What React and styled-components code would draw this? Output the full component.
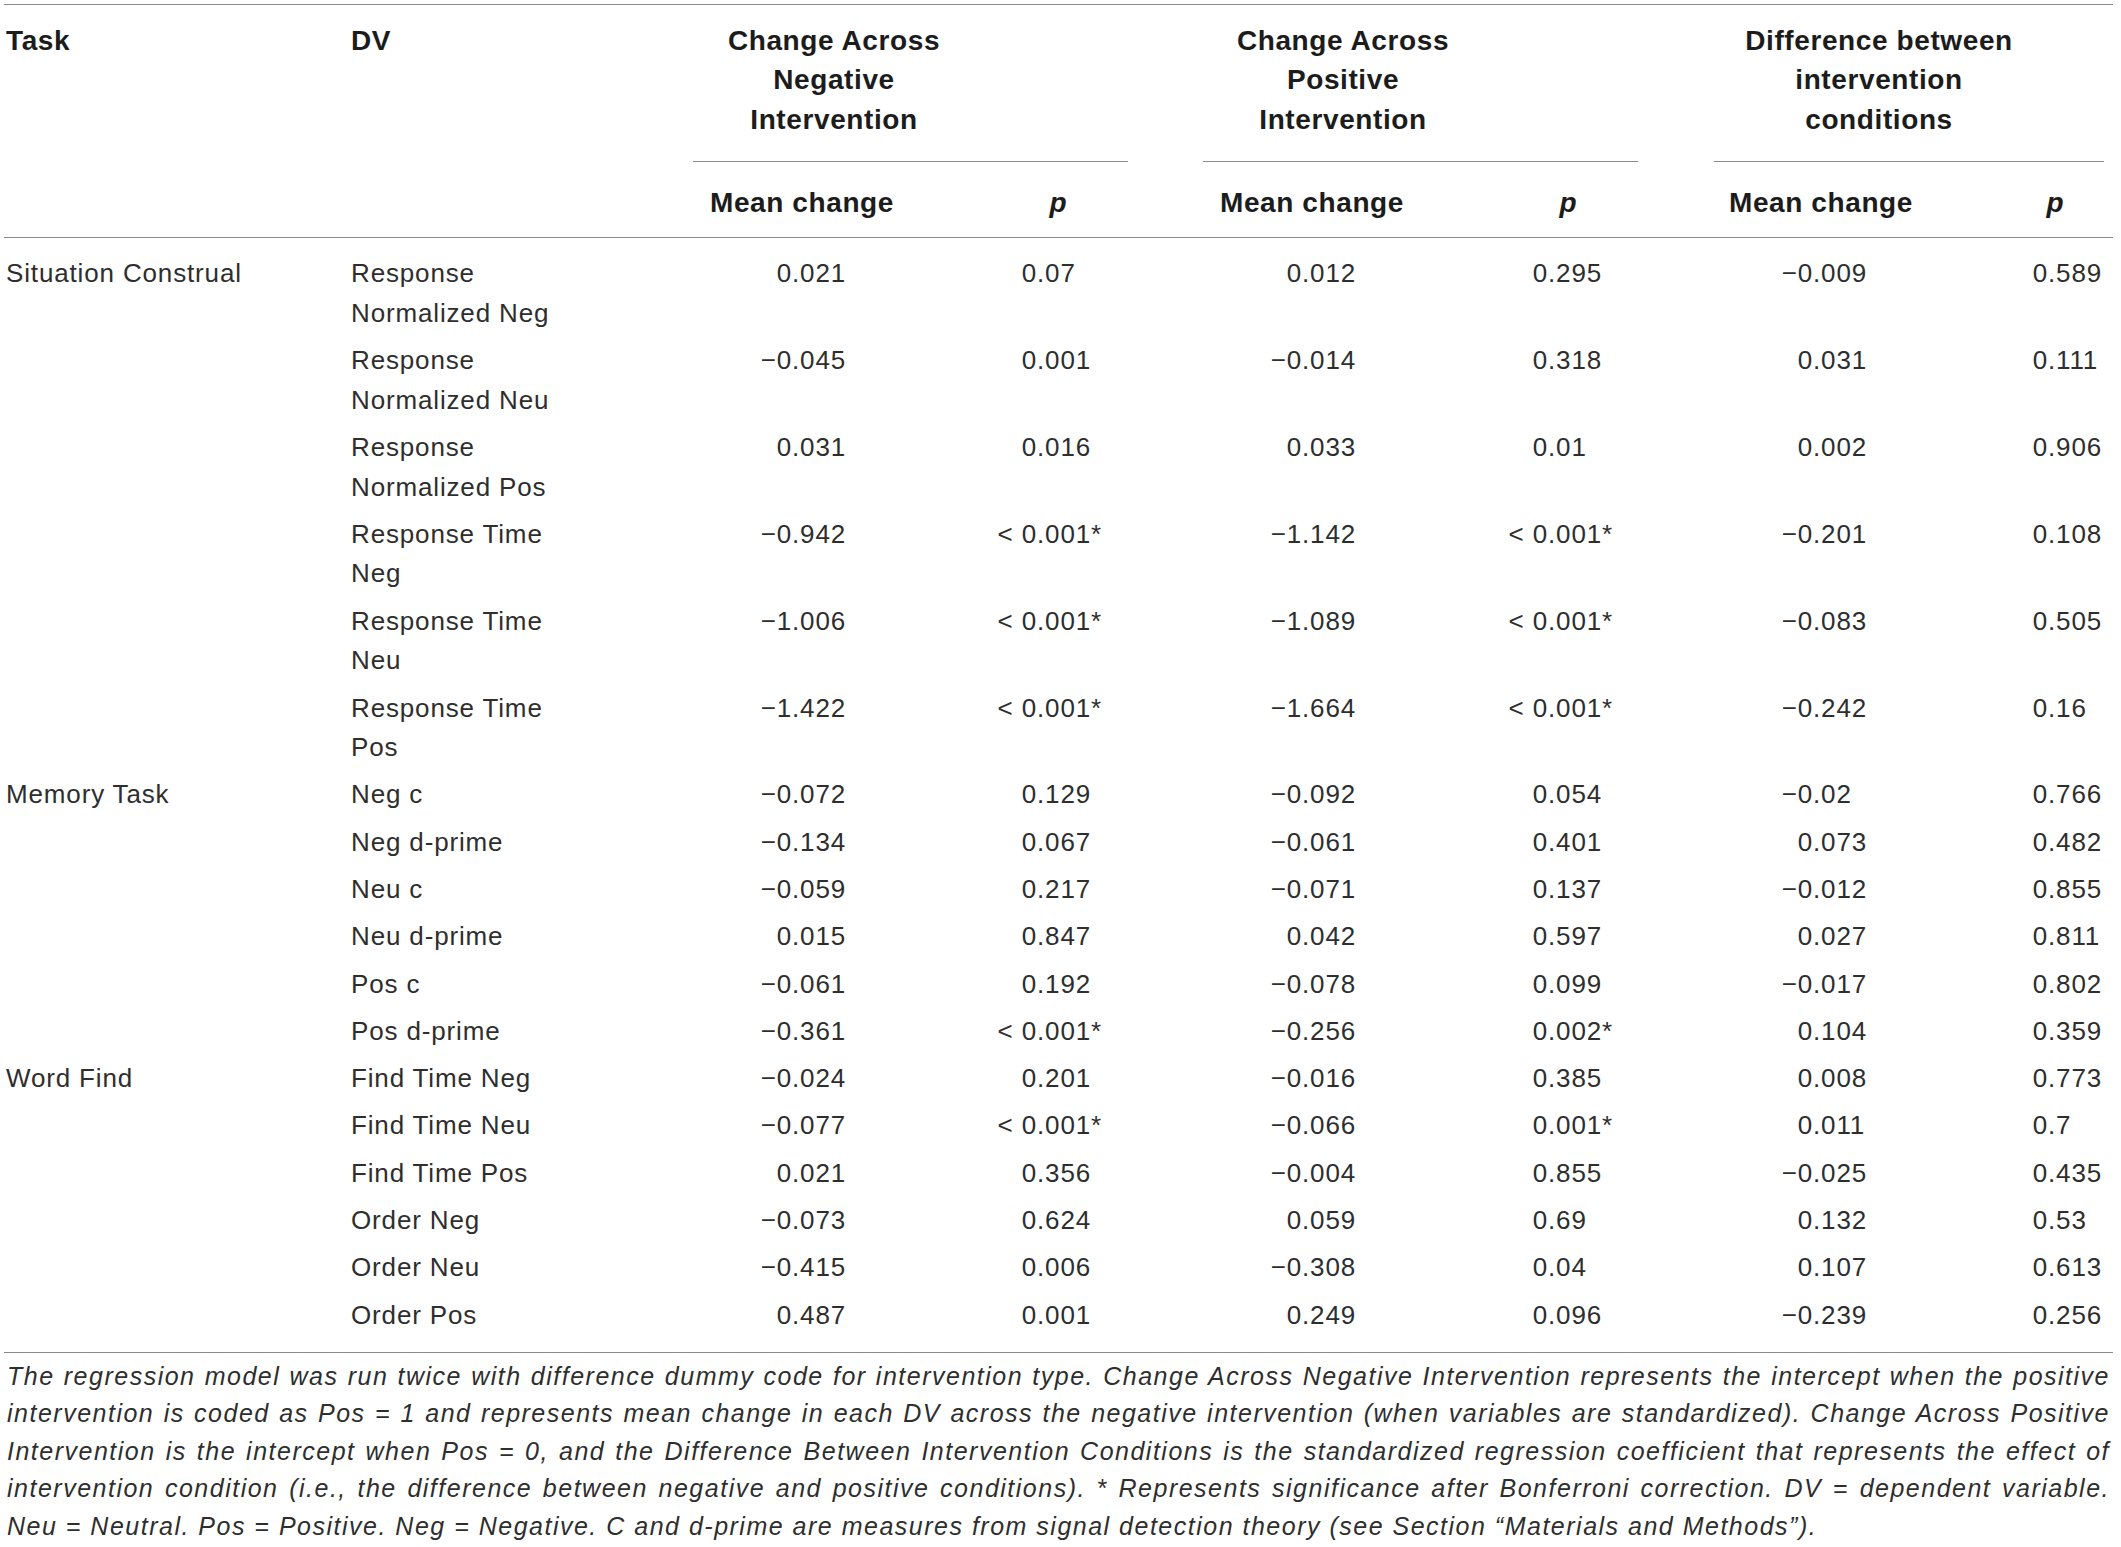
import React from "react"
import styled, { createGlobalStyle } from "styled-components"

const GlobalStyle = createGlobalStyle`
  body {
    margin: 0;
    background: #ffffff;
    font-family: "Liberation Sans", Arial, sans-serif;
    color: #2e2e2e;
  }
`;

const COLUMNS = "341px 348px 282px 228px 280px 231px 246px 153px";

const Page = styled.div`
  width: 2109px;
  padding: 4px 0 0 4px;
`;

const Head = styled.div`
  display: grid;
  grid-template-columns: ${COLUMNS};
  border-top: 1px solid #8a8a8a;
  border-bottom: 1px solid #8a8a8a;
  font-size: 28px;
  font-weight: 700;
  letter-spacing: 0.6px;
  line-height: 39.3px;
  color: #1c1c1c;
`;

const HeadLabel = styled.div`
  grid-row: span 2;
  padding: 16px 0 0 ${(p) => p.$pad}px;
`;

const GroupCell = styled.div`
  grid-column: span 2;
  margin-right: ${(p) => p.$gap}px;
  padding: 16px 0 22px;
  border-bottom: 1px solid #8a8a8a;
`;

const GroupTitle = styled.div`
  width: ${(p) => p.$width}px;
  text-align: center;
`;

const SubHead = styled.div`
  padding: 21.3px 0 14.4px ${(p) => p.$pad}px;
  font-style: ${(p) => (p.$italic ? "italic" : "normal")};
`;

const Body = styled.div`
  display: grid;
  grid-template-columns: ${COLUMNS};
  padding: 12.5px 0 12.5px;
  border-bottom: 1px solid #8a8a8a;
  font-size: 26px;
  letter-spacing: 0.85px;
  line-height: 39.6px;
`;

const TextCell = styled.div`
  padding: 3.85px 0 3.85px ${(p) => p.$pad}px;
  white-space: pre-line;
`;

const NumCell = styled.div`
  padding: 3.85px 0;
  white-space: pre;
`;

const IntPart = styled.span`
  display: inline-block;
  width: ${(p) => p.$dec}px;
  text-align: right;
`;

const Foot = styled.div`
  padding: 5px 3px 0 3px;
  font-size: 25px;
  font-style: italic;
  letter-spacing: 1.5px;
  line-height: 37.5px;
`;

const FootLine = styled.div`
  text-align: ${(p) => (p.$last ? "left" : "justify")};
  text-align-last: ${(p) => (p.$last ? "left" : "justify")};
  white-space: nowrap;
`;

// decimal point offset inside each numeric column
const DECIMALS = [99, 62, 99, 65, 99, 88];

const GROUPS = [
  { lines: ["Change Across", "Negative", "Intervention"], width: 282, gap: 75 },
  { lines: ["Change Across", "Positive", "Intervention"], width: 280, gap: 76 },
  { lines: ["Difference between", "intervention", "conditions"], width: 330, gap: 9 },
];

const SUBHEADS = [
  { label: "Mean change", pad: 17 },
  { label: "p", pad: 74.5, italic: true },
  { label: "Mean change", pad: 17 },
  { label: "p", pad: 76.5, italic: true },
  { label: "Mean change", pad: 15 },
  { label: "p", pad: 86.5, italic: true },
];

const M = "\u2212";

const ROWS = [
  ["Situation Construal", "Response\nNormalized Neg", "0.021", "0.07", "0.012", "0.295", `${M}0.009`, "0.589"],
  ["", "Response\nNormalized Neu", `${M}0.045`, "0.001", `${M}0.014`, "0.318", "0.031", "0.111"],
  ["", "Response\nNormalized Pos", "0.031", "0.016", "0.033", "0.01", "0.002", "0.906"],
  ["", "Response Time\nNeg", `${M}0.942`, "< 0.001*", `${M}1.142`, "< 0.001*", `${M}0.201`, "0.108"],
  ["", "Response Time\nNeu", `${M}1.006`, "< 0.001*", `${M}1.089`, "< 0.001*", `${M}0.083`, "0.505"],
  ["", "Response Time\nPos", `${M}1.422`, "< 0.001*", `${M}1.664`, "< 0.001*", `${M}0.242`, "0.16"],
  ["Memory Task", "Neg c", `${M}0.072`, "0.129", `${M}0.092`, "0.054", `${M}0.02`, "0.766"],
  ["", "Neg d-prime", `${M}0.134`, "0.067", `${M}0.061`, "0.401", "0.073", "0.482"],
  ["", "Neu c", `${M}0.059`, "0.217", `${M}0.071`, "0.137", `${M}0.012`, "0.855"],
  ["", "Neu d-prime", "0.015", "0.847", "0.042", "0.597", "0.027", "0.811"],
  ["", "Pos c", `${M}0.061`, "0.192", `${M}0.078`, "0.099", `${M}0.017`, "0.802"],
  ["", "Pos d-prime", `${M}0.361`, "< 0.001*", `${M}0.256`, "0.002*", "0.104", "0.359"],
  ["Word Find", "Find Time Neg", `${M}0.024`, "0.201", `${M}0.016`, "0.385", "0.008", "0.773"],
  ["", "Find Time Neu", `${M}0.077`, "< 0.001*", `${M}0.066`, "0.001*", "0.011", "0.7"],
  ["", "Find Time Pos", "0.021", "0.356", `${M}0.004`, "0.855", `${M}0.025`, "0.435"],
  ["", "Order Neg", `${M}0.073`, "0.624", "0.059", "0.69", "0.132", "0.53"],
  ["", "Order Neu", `${M}0.415`, "0.006", `${M}0.308`, "0.04", "0.107", "0.613"],
  ["", "Order Pos", "0.487", "0.001", "0.249", "0.096", `${M}0.239`, "0.256"],
];

const NOTE = [
  "The regression model was run twice with difference dummy code for intervention type. Change Across Negative Intervention represents the intercept when the positive",
  "intervention is coded as Pos = 1 and represents mean change in each DV across the negative intervention (when variables are standardized). Change Across Positive",
  "Intervention is the intercept when Pos = 0, and the Difference Between Intervention Conditions is the standardized regression coefficient that represents the effect of",
  "intervention condition (i.e., the difference between negative and positive conditions). * Represents significance after Bonferroni correction. DV = dependent variable.",
  "Neu = Neutral. Pos = Positive. Neg = Negative. C and d-prime are measures from signal detection theory (see Section \u201cMaterials and Methods\u201d).",
];

function Num({ value, dec }) {
  const dot = value.indexOf(".");
  return (
    <NumCell>
      <IntPart $dec={dec}>{value.slice(0, dot)}</IntPart>
      {value.slice(dot)}
    </NumCell>
  );
}

export default function App() {
  return (
    <>
      <GlobalStyle />
      <Page>
        <Head>
          <HeadLabel $pad={2}>Task</HeadLabel>
          <HeadLabel $pad={6}>DV</HeadLabel>
          {GROUPS.map((g, i) => (
            <GroupCell key={i} $gap={g.gap}>
              <GroupTitle $width={g.width}>
                {g.lines.map((l, j) => (
                  <div key={j}>{l}</div>
                ))}
              </GroupTitle>
            </GroupCell>
          ))}
          {SUBHEADS.map((s, i) => (
            <SubHead key={i} $pad={s.pad} $italic={s.italic}>
              {s.label}
            </SubHead>
          ))}
        </Head>

        <Body>
          {ROWS.map((row, r) => (
            <React.Fragment key={r}>
              <TextCell $pad={2}>{row[0]}</TextCell>
              <TextCell $pad={6}>{row[1]}</TextCell>
              {row.slice(2).map((v, c) => (
                <Num key={c} value={v} dec={DECIMALS[c]} />
              ))}
            </React.Fragment>
          ))}
        </Body>

        <Foot>
          {NOTE.map((line, i) => (
            <FootLine key={i} $last={i === NOTE.length - 1}>
              {line}
            </FootLine>
          ))}
        </Foot>
      </Page>
    </>
  );
}
